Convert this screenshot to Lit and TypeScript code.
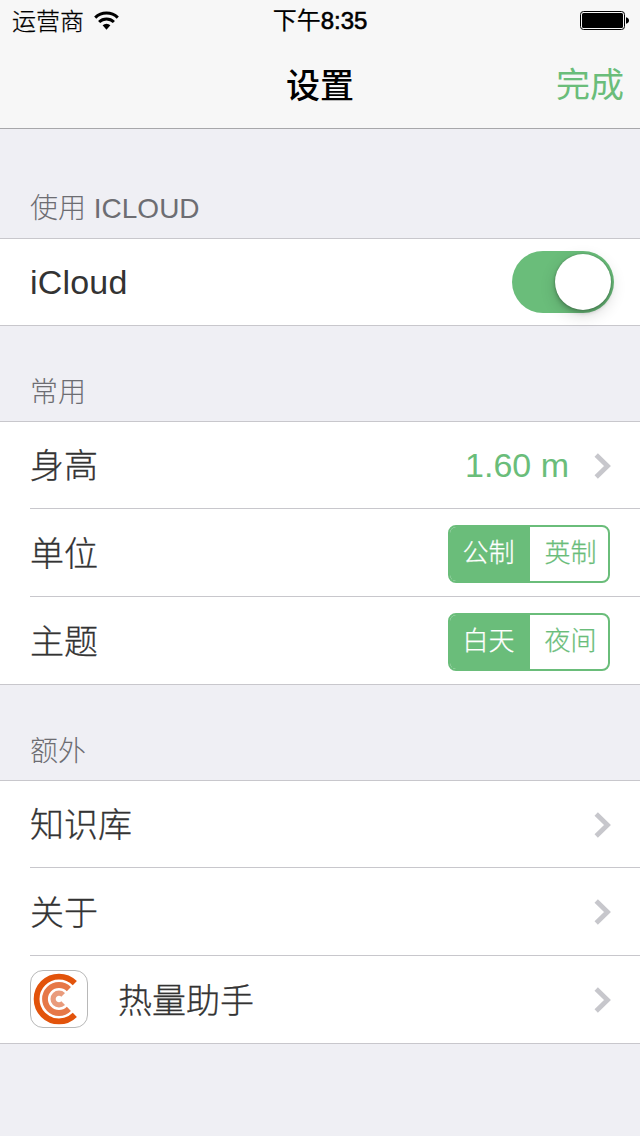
import { LitElement, html, css, svg } from "lit";
import { customElement, property, state } from "lit/decorators.js";
import { classMap } from "lit/directives/class-map.js";

@customElement("status-bar")
class StatusBar extends LitElement {
  static styles = css`
    :host { display: grid; grid-template-columns: 1fr auto 1fr; height: 40px; color: #000; font-size: 24px; line-height: 40px; white-space: nowrap; }
    .left { display: flex; align-items: center; padding-left: 12px; font-weight: 300; }
    .carrier { padding-top: 2px; -webkit-text-stroke: 0.25px #000; }
    .wifi { margin: 0 0 1px 10px; display: block; }
    .time { padding-top: 1px; font-weight: 500; -webkit-text-stroke: 0.6px #000; }
    .cjk { font-weight: 400; -webkit-text-stroke: 0.2px #000; }
    .right { display: flex; justify-content: flex-end; padding: 11px 11px 0 0; }
    svg { display: block; }
  `;
  render() {
    return html`
      <div class="left"><span class="carrier">运营商</span>
        <svg class="wifi" width="25" height="20" viewBox="0 0 25 20">
          <g fill="none" stroke="#000" stroke-width="3">
            <path d="M1.2 6.6A16.2 16.2 0 0 1 23.8 6.6" />
            <path d="M5.1 11A10.6 10.6 0 0 1 19.9 11" />
          </g>
          <path d="M8.6 14.3A5.6 5.6 0 0 1 16.4 14.3L12.5 18.8Z" />
        </svg>
      </div>
      <div class="time"><span class="cjk">下午</span>8:35</div>
      <div class="right">
        <svg width="50" height="20" viewBox="0 0 50 20">
          <rect x="1.5" y=".5" width="44" height="18" rx="3" fill="none" stroke="#000" />
          <rect x="3" y="2" width="41" height="15" rx="1.5" />
          <path d="M47 6.2Q50 7 50 9.5T47 12.8Z" />
        </svg>
      </div>`;
  }
}

@customElement("toggle-switch")
class ToggleSwitch extends LitElement {
  static styles = css`
    :host { display: flex; box-sizing: border-box; width: 102px; height: 62px; padding: 3px; justify-content: flex-end; border-radius: 31px; background: #6abd7a; }
    .knob { width: 56px; height: 56px; border-radius: 50%; background: #fff; box-shadow: 0 0 2px rgba(0,0,0,.25), 0 5px 16px rgba(0,0,0,.16), 0 3px 4px rgba(0,0,0,.2); }
  `;
  render() { return html`<div class="knob"></div>`; }
}

@customElement("segmented-control")
class SegmentedControl extends LitElement {
  @property({ attribute: false }) options: string[] = [];
  @state() selected = 0;
  static styles = css`
    :host { display: grid; grid-template-columns: 80px 78px; box-sizing: border-box; width: 162px; height: 58px; border: 2px solid #6abd7a; border-radius: 8px; background: #fff; overflow: hidden; }
    .seg { box-sizing: border-box; padding-right: 3px; color: #6abd7a; text-align: center; font-size: 26px; font-weight: 300; line-height: 53px; -webkit-text-stroke: 0.25px currentColor; }
    .on { background: #6abd7a; color: #fff; }
    .seg:last-child { padding: 0 0 0 3px; }
  `;
  render() {
    return this.options.map((o, i) => html`<div class=${classMap({ seg: true, on: i === this.selected })}
      @click=${() => (this.selected = i)}>${o}</div>`);
  }
}

const chevron = html`<svg class="chevron" width="17" height="26" viewBox="0 0 17 26">
  <path d="M2.2 2L13.5 13L2.2 24" fill="none" stroke="#c7c7cc" stroke-width="4.8" /></svg>`;

const arc = (r: number, w: number, c: string) => {
  const d = r * 0.7071;
  return svg`<path d="M${29 + d} ${29 - d}A${r} ${r} 0 1 0 ${29 + d} ${29 + d}" fill="none" stroke=${c} stroke-width=${w} />`;
};

const appIcon = html`<svg class="app-icon" width="58" height="58" viewBox="0 0 58 58">
  <rect x=".5" y=".5" width="57" height="57" rx="12.5" fill="#fff" stroke="#b8b8b8" />
  ${arc(22.4, 5.8, "#e2530b")}${arc(14, 5.8, "#e67848")}${arc(5.9, 5.2, "#e99b7c")}
</svg>`;

@customElement("app-root")
class AppRoot extends LitElement {
  static styles = css`
    :host { display: block; width: 640px; height: 1136px; overflow: hidden; background: #efeff4; color: #333;
      font-family: "Liberation Sans", "Noto Sans CJK SC", sans-serif; }
    .top { box-sizing: border-box; height: 129px; background: #f7f7f7; border-bottom: 1px solid #a7a7aa; }
    .nav { display: grid; grid-template-columns: 1fr auto 1fr; height: 88px; font-size: 34px; line-height: 92px; color: #000; }
    .title { grid-column: 2; font-weight: 500; }
    .done { padding-right: 16px; text-align: right; color: #6abd7a; line-height: 90px; }
    .heading { box-sizing: border-box; height: 95px; padding: 48px 30px 0; color: #6d6d72; font-size: 28px; font-weight: 300; line-height: 38px; }
    .heading.first { height: 109px; padding-top: 61px; }
    .group { background: #fff; border: solid #c8c7cc; border-width: 1px 0; }
    .row { display: flex; align-items: center; height: 87px; margin-left: 30px; padding-right: 29px; font-size: 34px; font-weight: 300; }
    .row:first-child { height: 86px; }
    .row + .row { border-top: 1px solid #c8c7cc; }
    .label { flex: 1; line-height: 48px; padding-top: 2px; -webkit-text-stroke: 0.3px #333; }
    .label.latin { padding-top: 0; letter-spacing: 0.2px; -webkit-text-stroke: 0; }
    .value { color: #6abd7a; margin-right: 25px; }
    .chevron { display: block; margin-top: 1px; }
    .app-icon { display: block; margin-right: 30px; margin-bottom: 1px; }
    segmented-control { margin: 2px 1px 0 0; }
    toggle-switch { margin-right: -3px; }
  `;
  render() {
    return html`
      <header class="top">
        <status-bar></status-bar>
        <div class="nav"><div class="title">设置</div><div class="done">完成</div></div>
      </header>
      <div class="heading first">使用 ICLOUD</div>
      <section class="group">
        <div class="row"><span class="label latin">iCloud</span><toggle-switch></toggle-switch></div>
      </section>
      <div class="heading">常用</div>
      <section class="group">
        <div class="row"><span class="label">身高</span><span class="value">1.60 m</span>${chevron}</div>
        <div class="row"><span class="label">单位</span><segmented-control .options=${["公制", "英制"]}></segmented-control></div>
        <div class="row"><span class="label">主题</span><segmented-control .options=${["白天", "夜间"]}></segmented-control></div>
      </section>
      <div class="heading">额外</div>
      <section class="group">
        <div class="row"><span class="label">知识库</span>${chevron}</div>
        <div class="row"><span class="label">关于</span>${chevron}</div>
        <div class="row">${appIcon}<span class="label">热量助手</span>${chevron}</div>
      </section>`;
  }
}
